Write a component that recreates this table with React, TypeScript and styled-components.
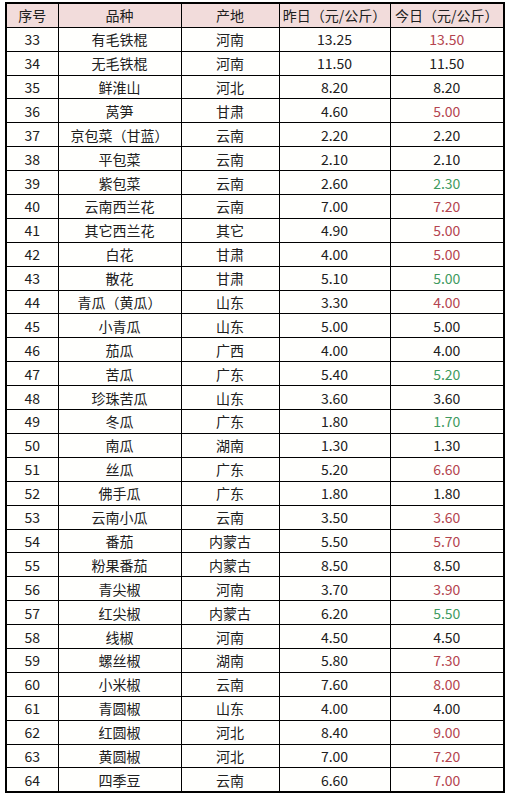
import { styled, createGlobalStyle } from "styled-components";

const GlobalStyle = createGlobalStyle`
  body {
    margin: 0;
    background: #ffffff;
    font-family: "Noto Sans CJK SC", "Noto Sans", sans-serif;
  }
`;

const Page = styled.div`
  padding: 2px 0 0 5px;
`;

const Table = styled.table`
  width: 498px;
  border-collapse: collapse;
  table-layout: fixed;
  border: 2px solid #000;
  background: #fffffd;
  color: #202020;
  font-size: 14px;
`;

const HeadCell = styled.th`
  height: 22.8px;
  padding: 0;
  border: 1px solid #000;
  background: #f2dcdb;
  font-weight: 400;
  text-align: center;
  white-space: nowrap;
  line-height: 1;
`;

// 涨价红色, 跌价绿色
const Cell = styled.td<{ $trend?: "up" | "down" }>`
  height: 22.9px;
  padding: 0;
  border: 1px solid #000;
  text-align: center;
  white-space: nowrap;
  line-height: 1;
  color: ${(p) =>
    p.$trend === "up" ? "#b4444f" : p.$trend === "down" ? "#3e9a60" : "#202020"};
`;

type Row = [number, string, string, string, string];

const rows: Row[] = [
  [33, "有毛铁棍", "河南", "13.25", "13.50"],
  [34, "无毛铁棍", "河南", "11.50", "11.50"],
  [35, "鲜淮山", "河北", "8.20", "8.20"],
  [36, "莴笋", "甘肃", "4.60", "5.00"],
  [37, "京包菜（甘蓝）", "云南", "2.20", "2.20"],
  [38, "平包菜", "云南", "2.10", "2.10"],
  [39, "紫包菜", "云南", "2.60", "2.30"],
  [40, "云南西兰花", "云南", "7.00", "7.20"],
  [41, "其它西兰花", "其它", "4.90", "5.00"],
  [42, "白花", "甘肃", "4.00", "5.00"],
  [43, "散花", "甘肃", "5.10", "5.00"],
  [44, "青瓜（黄瓜）", "山东", "3.30", "4.00"],
  [45, "小青瓜", "山东", "5.00", "5.00"],
  [46, "茄瓜", "广西", "4.00", "4.00"],
  [47, "苦瓜", "广东", "5.40", "5.20"],
  [48, "珍珠苦瓜", "山东", "3.60", "3.60"],
  [49, "冬瓜", "广东", "1.80", "1.70"],
  [50, "南瓜", "湖南", "1.30", "1.30"],
  [51, "丝瓜", "广东", "5.20", "6.60"],
  [52, "佛手瓜", "广东", "1.80", "1.80"],
  [53, "云南小瓜", "云南", "3.50", "3.60"],
  [54, "番茄", "内蒙古", "5.50", "5.70"],
  [55, "粉果番茄", "内蒙古", "8.50", "8.50"],
  [56, "青尖椒", "河南", "3.70", "3.90"],
  [57, "红尖椒", "内蒙古", "6.20", "5.50"],
  [58, "线椒", "河南", "4.50", "4.50"],
  [59, "螺丝椒", "湖南", "5.80", "7.30"],
  [60, "小米椒", "云南", "7.60", "8.00"],
  [61, "青圆椒", "山东", "4.00", "4.00"],
  [62, "红圆椒", "河北", "8.40", "9.00"],
  [63, "黄圆椒", "河北", "7.00", "7.20"],
  [64, "四季豆", "云南", "6.60", "7.00"],
];

const trendOf = (before: string, now: string) => {
  const a = parseFloat(before);
  const b = parseFloat(now);
  if (b > a) return "up" as const;
  if (b < a) return "down" as const;
  return undefined;
};

export default function App() {
  return (
    <Page>
      <GlobalStyle />
      <Table>
        <colgroup>
          <col style={{ width: 52 }} />
          <col style={{ width: 123 }} />
          <col style={{ width: 98 }} />
          <col style={{ width: 111 }} />
          <col style={{ width: 114 }} />
        </colgroup>
        <thead>
          <tr>
            <HeadCell>序号</HeadCell>
            <HeadCell>品种</HeadCell>
            <HeadCell>产地</HeadCell>
            <HeadCell>昨日（元/公斤）</HeadCell>
            <HeadCell>今日（元/公斤）</HeadCell>
          </tr>
        </thead>
        <tbody>
          {rows.map(([no, name, origin, before, now]) => (
            <tr key={no}>
              <Cell>{no}</Cell>
              <Cell>{name}</Cell>
              <Cell>{origin}</Cell>
              <Cell>{before}</Cell>
              <Cell $trend={trendOf(before, now)}>{now}</Cell>
            </tr>
          ))}
        </tbody>
      </Table>
    </Page>
  );
}
